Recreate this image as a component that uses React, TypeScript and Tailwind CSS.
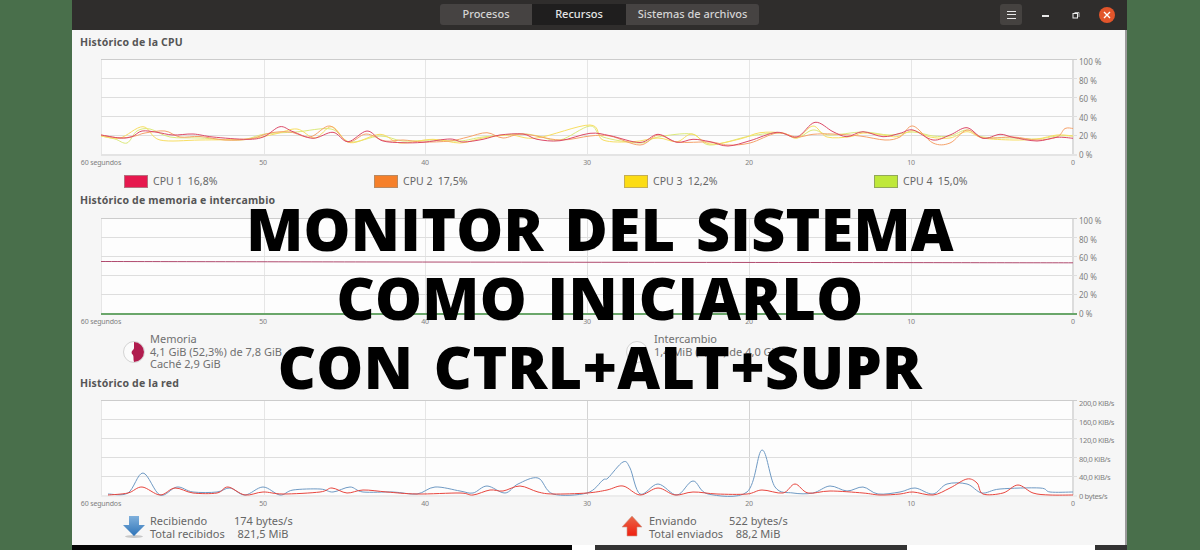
type Pt = [number, number];

const CHART_X = 101;

// catmull-rom through the points, coords are page x / y relative to chart top
function smooth(points: Pt[], top: number) {
  const p = points.map(([x, y]) => [x - CHART_X, y - top]);
  let d = `M${p[0][0]} ${p[0][1]}`;
  for (let i = 0; i < p.length - 1; i++) {
    const a = p[i - 1] || p[i];
    const b = p[i];
    const c = p[i + 1];
    const e = p[i + 2] || c;
    const c1x = b[0] + (c[0] - a[0]) / 6;
    const c1y = b[1] + (c[1] - a[1]) / 6;
    const c2x = c[0] - (e[0] - b[0]) / 6;
    const c2y = c[1] - (e[1] - b[1]) / 6;
    d += `C${c1x.toFixed(1)} ${c1y.toFixed(1)} ${c2x.toFixed(1)} ${c2y.toFixed(1)} ${c[0].toFixed(1)} ${c[1].toFixed(1)}`;
  }
  return d;
}

const cpu1: Pt[] = [[101,135],[120,138],[132,136.7],[142,131],[157,132.3],[173,135],[193,134],[213,137],[247,139.3],[264,136.7],[280,126.7],[293,131.7],[313,138.3],[333,132.3],[348,141.7],[367,131],[382,140.7],[403,142.7],[423,142.3],[450,139],[463,142],[483,139.3],[500,135],[523,134],[537,139.3],[560,140.7],[590,133.3],[610,135.7],[640,142.5],[658,134.3],[677,142.3],[693,139.3],[710,141.7],[728,146],[750,140.7],[777,132.3],[797,137],[815,122.3],[833,131.7],[847,136.7],[863,131.7],[883,136.7],[900,133.3],[913,130],[933,140],[950,135],[967,127.7],[983,138.3],[1000,134.3],[1013,137.3],[1037,141],[1057,137.3],[1073,138.3]];
const cpu2: Pt[] = [[101,135],[120,138],[135,136],[145,133],[165,131],[180,137],[200,136.5],[225,140],[250,139],[270,133],[290,132],[310,137],[330,126],[348,142],[366,134],[385,141],[403,140],[423,142],[450,141],[468,137],[487,132.7],[503,138],[523,134],[560,140],[590,136],[610,136],[640,145],[658,135],[677,142],[710,142],[728,145],[750,143],[777,133],[797,137],[813,134.3],[833,134],[860,136],[885,140],[900,137],[913,126],[933,143],[950,143],[967,130],[983,138],[1013,137],[1037,140],[1057,137],[1065,128.5],[1073,128.5]];
const cpu3: Pt[] = [[101,136],[120,138],[143,126.7],[160,140],[200,140],[247,139],[275,134],[297,129],[315,138],[332,126.7],[350,142.7],[380,134.3],[400,143],[433,139.3],[460,143],[483,138],[510,135],[537,138],[590,125],[603,140],[633,141.7],[658,138],[677,141.7],[692,134],[710,144],[740,139],[760,132.7],[783,133],[797,138],[813,126],[827,137],[850,136.7],[863,133],[883,135],[897,136.7],[913,130.7],[930,137],[950,138],[967,131.7],[983,138],[1013,140],[1037,139],[1057,135],[1073,136]];
const cpu4: Pt[] = [[101,136],[115,139],[127,143],[137,131],[150,129],[170,137],[200,138],[240,140],[265,134],[296,132],[331,129],[350,142],[380,136],[403,141],[433,140],[460,141],[483,137],[520,134],[537,135.7],[560,140],[590,126],[603,137],[640,143],[658,137],[692,134],[710,145],[750,136],[780,133],[797,138],[813,130],[830,135],[863,132],[890,135],[913,132],[933,136],[950,136],[967,130],[983,137],[1013,138],[1037,139],[1057,136],[1073,136]];

const netIn: Pt[] = [[108,494],[128,493],[143,473],[160,495],[177,487],[193,492],[217,492],[230,488],[245,495],[263,487],[280,495],[293,490],[320,489],[333,492],[350,487],[363,492],[393,492],[417,494],[435,487],[460,491],[473,493],[487,486],[505,493],[518,484],[538,478],[553,494],[587,493],[603,480],[608,478],[623,462],[630,468],[640,494],[658,484],[677,495],[693,481],[708,494],[747,492],[762,450],[775,487],[793,493],[813,493],[830,486],[847,491],[863,487],[878,494],[900,492],[915,488],[933,494],[947,484],[967,484],[982,493],[1000,489],[1040,488],[1050,492],[1073,492]];
const netOut: Pt[] = [[108,495],[128,493],[142,487],[160,495],[175,488],[193,493],[217,493],[228,487],[245,495],[263,492],[283,494],[320,492],[332,488],[347,493],[363,490],[387,492],[417,494],[460,493],[473,495],[490,490],[503,491],[520,486],[538,492],[553,494],[587,493],[607,490],[623,486],[640,495],[658,488],[675,495],[693,492],[717,494],[747,494],[762,490],[783,493],[795,484],[808,493],[830,491],[863,493],[880,495],[900,494],[913,492],[933,495],[950,488],[967,479],[977,483],[983,494],[1003,493],[1018,485],[1033,493],[1050,495],[1073,495]];

const xLabels = ["60 segundos", "50", "40", "30", "20", "10", "0"];
const gridX = [0.5, 163.5, 324.5, 486.5, 648.5, 810.5, 972];
const gridY = [0.5, 19.5, 38.5, 57.5, 76.5];

function Chart({ top, yLabels, lines, base, narrow, midLine }: { top: number; yLabels: string[]; lines: { pts: Pt[]; color: string }[]; base: string; narrow?: boolean; midLine: string }) {
  return (
    <div>
      <div className="flex h-[97px] pl-[29px]">
        <svg width="977" height="97" viewBox="0 0 977 97" className="shrink-0">
          <rect x="0" y="0" width="972" height="96" fill="#fdfdfd" />
          {gridX.map((x, i) => (
            <line key={x} x1={x} x2={x} y1="0" y2="96" stroke={i === 3 || i === 4 ? midLine : i === 6 ? "#dcdcdc" : "#e6e6e6"} strokeWidth={i === 6 ? 2 : 1} />
          ))}
          {gridY.map((y, i) => (
            <line key={y} x1="0" x2="976" y1={y} y2={y} stroke={i === 0 ? "#cccccc" : "#dedede"} />
          ))}
          <line x1="0" x2="976" y1="96" y2="96" stroke={base} strokeWidth="2" />
          {lines.map((l) => (
            <path key={l.color} d={smooth(l.pts, top)} fill="none" stroke={l.color} strokeWidth="1" />
          ))}
        </svg>
        <div className={"ml-[1px] -mt-px flex h-[101px] flex-col justify-between leading-[8px] text-[#808080] " + (narrow ? "text-[7.5px] tracking-[-0.35px]" : "text-[8px]")}>
          {yLabels.map((t) => (
            <span key={t} className="whitespace-nowrap">{t}</span>
          ))}
        </div>
      </div>
      <div className="mt-[3px] ml-[29px] flex h-[8px] w-[972px] justify-between text-[7px] leading-[8px] tracking-[-0.15px] text-[#808080]">
        {xLabels.map((t) => (
          <span key={t} className="flex w-0 justify-center whitespace-nowrap">{t}</span>
        ))}
      </div>
    </div>
  );
}

function Title({ children, className }: { children: string; className: string }) {
  return <h2 className={"ml-[8px] h-[13px] text-[10.5px] leading-[13px] font-bold tracking-[0.2px] text-[#555555] " + className}>{children}</h2>;
}

function CpuItem({ name, value, color, edge }: { name: string; value: string; color: string; edge: string }) {
  return (
    <div className="flex items-center gap-[5px]">
      <span className={"h-[13px] w-[24px] border " + color + " " + edge} />
      <span className="whitespace-pre">{name + "  " + value}</span>
    </div>
  );
}

function Pie({ filled }: { filled: boolean }) {
  return (
    <svg width="24" height="24" viewBox="0 0 24 24" className="shrink-0">
      <circle cx="12" cy="12" r="10.5" fill="#fbfbfb" stroke="#d4d4d4" />
      {filled && <path d="M12 2a10 10 0 0 1 0 20c-1-3 0-5-1-7 -1-1-2-2-1-4 1-1 2-2 2-3z" fill="#b01c4e" />}
    </svg>
  );
}

function Arrow({ up }: { up: boolean }) {
  return (
    <svg width="24" height="24" viewBox="0 0 24 24" className="shrink-0">
      <defs>
        <linearGradient id="arrowBlue" x1="0" y1="0" x2="0" y2="1">
          <stop offset="0" stopColor="#7fb0dc" />
          <stop offset="1" stopColor="#2f74b8" />
        </linearGradient>
        <linearGradient id="arrowRed" x1="0" y1="0" x2="0" y2="1">
          <stop offset="0" stopColor="#e8684a" />
          <stop offset="1" stopColor="#f02010" />
        </linearGradient>
      </defs>
      {up ? (
        <path d="M11 1 L21 12 H16 V21 H6 V12 H1 Z" fill="url(#arrowRed)" stroke="#c9a08f" strokeWidth="0.6" />
      ) : (
        <>
          <ellipse cx="11" cy="21.5" rx="9" ry="1.5" fill="#c8c8c8" />
          <path d="M6 1 H16 V10 H22 L11 21 L0 10 H6 Z" fill="url(#arrowBlue)" />
        </>
      )}
    </svg>
  );
}

export default function App() {
  return (
    <div className="relative h-[550px] w-[1200px] overflow-hidden bg-[#496f4b] font-['Noto_Sans','Open_Sans',sans-serif]">
      <div className="ml-[72px] flex w-[1055px] flex-col">
        {/* Header */}
        <header className="grid h-[30px] grid-cols-[1fr_auto_1fr] items-center bg-[#2f2d2c] pb-[1px]">
          <div />
          <div className="flex h-[21px] text-[11px] font-medium text-[#d4d4d4]">
            <div className="flex w-[92px] items-center justify-center rounded-l-[3px] bg-[#464342]">Procesos</div>
            <div className="flex w-[94px] items-center justify-center bg-[#1f1e1e] text-[#e4e4e4]">Recursos</div>
            <div className="flex w-[133px] items-center justify-center rounded-r-[3px] bg-[#464342]">Sistemas de archivos</div>
          </div>
          <div className="flex items-center justify-end">
            <button className="flex h-[21px] w-[22px] flex-col items-center justify-center gap-[2.5px] rounded-[3px] bg-[#454240]">
              <span className="h-px w-[9px] bg-[#e8e8e8]" />
              <span className="h-px w-[9px] bg-[#e8e8e8]" />
              <span className="h-px w-[9px] bg-[#e8e8e8]" />
            </button>
            <span className="mt-[3px] ml-[20px] h-[1.5px] w-[7px] bg-[#e8e8e8]" />
            <svg width="8" height="8" viewBox="0 0 8 8" className="ml-[23px]">
              <path d="M2.5 1.5H7V6" fill="none" stroke="#bdbdbd" />
              <rect x="1" y="2.5" width="4.5" height="4.5" fill="none" stroke="#eeeeee" />
            </svg>
            <span className="mr-[12px] ml-[19px] flex h-[16px] w-[16px] items-center justify-center rounded-full bg-[#e2552b]">
              <svg width="8" height="8" viewBox="0 0 8 8">
                <path d="M1 1L7 7M7 1L1 7" stroke="#ffffff" strokeWidth="1.4" />
              </svg>
            </span>
          </div>
        </header>

        {/* Sections */}
        <main className="h-[515px] border-r-2 border-[#9a9a9a] bg-[#f6f6f6] pt-[6px]">
          <Title className="mb-[10px]">Histórico de la CPU</Title>
          <Chart
            top={59}
            yLabels={["100 %", "80 %", "60 %", "40 %", "20 %", "0 %"]}
            base="#e4e4e4"
            midLine="#e6e6e6"
            lines={[
              { pts: cpu4, color: "#dbe97a" },
              { pts: cpu3, color: "#f8de62" },
              { pts: cpu2, color: "#f6a26a" },
              { pts: cpu1, color: "#dc4a68" },
            ]}
          />
          <div className="mt-[8px] ml-[52px] grid h-[13px] grid-cols-[250px_250px_250px_250px] text-[10.5px] leading-[13px] text-[#666666]">
            <CpuItem name="CPU 1" value="16,8%" color="bg-[#e6184e]" edge="border-[#b5707f]" />
            <CpuItem name="CPU 2" value="17,5%" color="bg-[#f6802a]" edge="border-[#b88a63]" />
            <CpuItem name="CPU 3" value="12,2%" color="bg-[#fcdc14]" edge="border-[#c4ae55]" />
            <CpuItem name="CPU 4" value="15,0%" color="bg-[#bfe83a]" edge="border-[#92a85a]" />
          </div>

          <Title className="mt-[6px] mb-[11px]">Histórico de memoria e intercambio</Title>
          <Chart
            top={218}
            yLabels={["100 %", "80 %", "60 %", "40 %", "20 %", "0 %"]}
            base="#6aa66a"
            midLine="#e0e0e0"
            lines={[{ pts: [[101,261.5],[400,262],[800,262.5],[1073,262.8]], color: "#b04a6e" }]}
          />
          <div className="mt-[7px] ml-[50px] grid h-[38px] grid-cols-[503px_300px] text-[11px] leading-[12.7px] text-[#707070]">
            <div className="flex items-center gap-[4px]">
              <Pie filled />
              <div>
                <div>Memoria</div>
                <div>4,1 GiB (52,3%) de 7,8 GiB</div>
                <div>Caché 2,9 GiB</div>
              </div>
            </div>
            <div className="flex items-center gap-[5px]">
              <Pie filled={false} />
              <div className="self-start">
                <div>Intercambio</div>
                <div>1,4 MiB (0,0%) de 4,0 GiB</div>
              </div>
            </div>
          </div>

          <Title className="mt-[6px] mb-[10px]">Histórico de la red</Title>
          <Chart
            top={400}
            yLabels={["200,0 KiB/s", "160,0 KiB/s", "120,0 KiB/s", "80,0 KiB/s", "40,0 KiB/s", "0 bytes/s"]}
            base="#ececec"
            midLine="#d4d4d4"
            narrow
            lines={[
              { pts: netIn, color: "#6f9ac4" },
              { pts: netOut, color: "#e8463e" },
            ]}
          />
          <div className="mt-[6px] ml-[51px] grid h-[26px] grid-cols-[498px_300px] text-[11px] leading-[13px] text-[#666666]">
            <div className="flex items-center gap-[3px]">
              <Arrow up={false} />
              <div className="grid grid-cols-[84px_58px] text-center">
                <span className="text-left">Recibiendo</span>
                <span className="whitespace-nowrap">174 bytes/s</span>
                <span className="text-left whitespace-nowrap">Total recibidos</span>
                <span className="whitespace-nowrap">821,5 MiB</span>
              </div>
            </div>
            <div className="flex items-center gap-[4px]">
              <Arrow up />
              <div className="grid grid-cols-[80px_58px] text-center">
                <span className="text-left">Enviando</span>
                <span className="whitespace-nowrap">522 bytes/s</span>
                <span className="text-left whitespace-nowrap">Total enviados</span>
                <span className="whitespace-nowrap">88,2 MiB</span>
              </div>
            </div>
          </div>
        </main>

        {/* Bottom edge, other windows behind */}
        <div className="flex h-[5px]">
          <div className="w-[500px] bg-[#050505]" />
          <div className="w-[23px] bg-white" />
          <div className="w-[312px] bg-[#333333]" />
          <div className="w-[188px] bg-white" />
          <div className="w-[32px] bg-[#333333]" />
        </div>
      </div>

      {/* Headline over the screenshot */}
      <div className="absolute inset-x-0 top-[194px] text-center font-['Open_Sans',sans-serif] text-[59px] leading-[69px] font-extrabold tracking-[0.3px] text-black [word-spacing:5px]">
        <div>MONITOR DEL SISTEMA</div>
        <div>COMO INICIARLO</div>
        <div>CON CTRL+ALT+SUPR</div>
      </div>
    </div>
  );
}
